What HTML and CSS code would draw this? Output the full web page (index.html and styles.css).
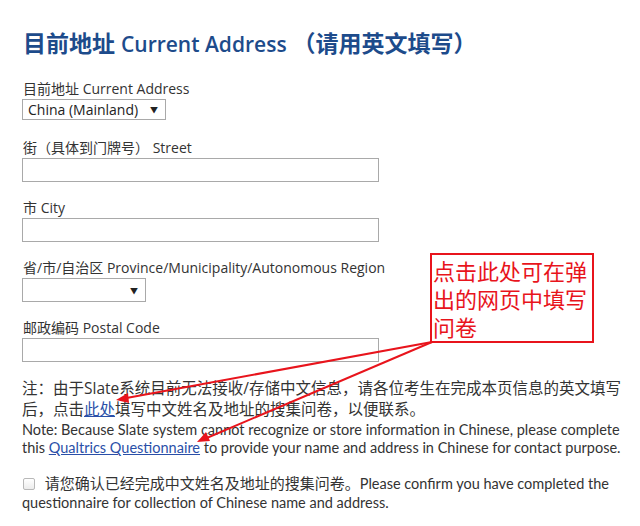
FILE: index.html
```html
<!DOCTYPE html>
<html lang="zh-CN">
<head>
  <meta charset="UTF-8">
  <meta name="viewport" content="width=device-width, initial-scale=1.0">
  <title>目前地址 Current Address</title>
  <link rel="stylesheet" href="styles.css">
</head>
<body>
  <div class="page">
    <h1 class="section-title">目前地址 <span class="latin">Current Address</span> （请用英文填写）</h1>

    <div class="field field-first">
      <label class="field-label">目前地址 Current Address</label>
      <div class="select-box select-country">
        <span>China (Mainland)</span>
        <span class="caret">▼</span>
      </div>
    </div>

    <div class="field">
      <label class="field-label">街（具体到门牌号） Street</label>
      <div class="text-input"></div>
    </div>

    <div class="field">
      <label class="field-label">市 City</label>
      <div class="text-input"></div>
    </div>

    <div class="field">
      <label class="field-label">省/市/自治区 Province/Municipality/Autonomous Region</label>
      <div class="select-box select-region">
        <span></span>
        <span class="caret">▼</span>
      </div>
    </div>

    <div class="field">
      <label class="field-label">邮政编码 Postal Code</label>
      <div class="text-input"></div>
    </div>

    <p class="note-cn">注：由于Slate系统目前无法接收/存储中文信息，请各位考生在完成本页信息的英文填写后，点击<a href="#">此处</a>填写中文姓名及地址的搜集问卷，以便联系。</p>
    <p class="note-en">Note: Because Slate system cannot recognize or store information in Chinese, please complete this <a href="#">Qualtrics Questionnaire</a> to provide your name and address in Chinese for contact purpose.</p>

    <label class="confirm">
      <span class="checkbox"></span>
      <span class="confirm-cn">请您确认已经完成中文姓名及地址的搜集问卷。</span>Please confirm you have completed the questionnaire for collection of Chinese name and address.
    </label>

    <div class="callout">点击此处可在弹出的网页中填写问卷</div>
    <svg class="arrows" width="640" height="526" viewBox="0 0 640 526">
      <g stroke="#e8141c" stroke-width="2" fill="none">
        <line x1="432" y1="342" x2="121" y2="399"></line>
        <line x1="432" y1="342" x2="202" y2="440"></line>
      </g>
      <g fill="#e8141c">
        <polygon points="116,400 128,393 129,403"></polygon>
        <polygon points="197,442 206,432 210,441"></polygon>
      </g>
    </svg>
  </div>
</body>
</html>
```

FILE: styles.css
```css
* {
  margin: 0;
  padding: 0;
  box-sizing: border-box;
}

body {
  width: 640px;
  height: 526px;
  overflow: hidden;
  background: #fff;
  font-family: 'Open Sans', 'Noto Sans CJK SC', sans-serif;
  color: #333;
}

.page {
  position: relative;
  height: 526px;
  padding: 27px 0 0 22px;
}

.section-title {
  font-size: 23px;
  font-weight: 700;
  color: #1d4b8b;
  line-height: 32px;
  margin: 0 0 19px 1px;
}

.section-title .latin {
  font-size: 21px;
  font-weight: 600;
}

.field {
  margin-bottom: 16px;
}

.field-first {
  margin-bottom: 18px;
}

.field-label {
  display: block;
  font-size: 14px;
  line-height: 20px;
  margin-left: 1px;
}

.select-box {
  display: flex;
  align-items: center;
  justify-content: space-between;
  height: 21px;
  border: 1px solid #a9a9a9;
  padding: 0 7px 0 5px;
  font-size: 14px;
  color: #222;
  background: #fff;
}

.select-country {
  width: 144px;
}

.select-region {
  width: 124px;
  height: 24px;
}

.caret {
  font-size: 8px;
}

.text-input {
  width: 357px;
  height: 24px;
  border: 1px solid #a9a9a9;
  background: #fff;
}

.note-cn {
  margin-top: 13px;
  width: 600px;
  font-size: 15.5px;
  line-height: 21px;
  color: #333;
}

.note-en {
  margin-top: 1px;
  width: 600px;
  font-family: Lato, 'Noto Sans CJK SC', sans-serif;
  font-size: 14.5px;
  line-height: 18px;
  color: #333;
}

.note-cn a,
.note-en a {
  color: #2a4fa8;
  text-decoration: underline;
}

.confirm {
  display: block;
  margin-top: 17px;
  width: 602px;
  font-family: Lato, 'Noto Sans CJK SC', sans-serif;
  font-size: 14.5px;
  line-height: 19px;
  color: #333;
}

.checkbox {
  display: inline-block;
  width: 12px;
  height: 12px;
  border: 1px solid #b8b8b8;
  border-radius: 2px;
  background: linear-gradient(#fff, #ececec);
  margin: 0 4px 0 1px;
  vertical-align: -1px;
}

.confirm-cn {
  font-size: 15px;
  margin-left: 2px;
}

.callout {
  position: absolute;
  left: 430px;
  top: 253px;
  width: 164px;
  height: 90px;
  border: 2px solid #e8141c;
  padding: 1px 0 0 1px;
  color: #e8141c;
  font-family: 'Noto Sans CJK SC', sans-serif;
  font-size: 22px;
  line-height: 28px;
  background: #fff;
}

.arrows {
  position: absolute;
  left: 0;
  top: 0;
  pointer-events: none;
}
```
